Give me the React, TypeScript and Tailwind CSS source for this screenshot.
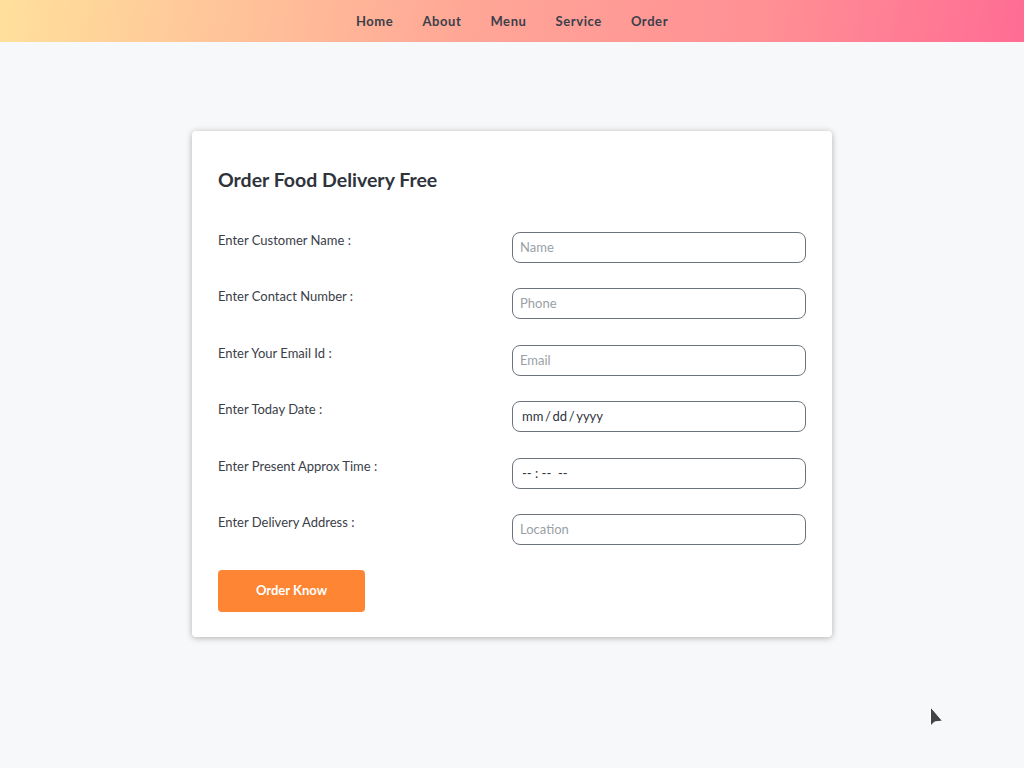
import React from "react";

const fields = [
  { label: "Enter Customer Name :", placeholder: "Name" },
  { label: "Enter Contact Number :", placeholder: "Phone" },
  { label: "Enter Your Email Id :", placeholder: "Email" },
  { label: "Enter Today Date :", value: "mm\u2009/\u2009dd\u2009/\u2009yyyy" },
  { label: "Enter Present Approx Time :", value: "-- : --  --" },
  { label: "Enter Delivery Address :", placeholder: "Location" },
];

const links = ["Home", "About", "Menu", "Service", "Order"];

const App: React.FC = () => {
  return (
    <div className="relative min-h-screen bg-[#f7f8fa] font-['Lato','Noto_Sans',sans-serif] text-[#343a40]">
      {/* barra superiore con gradiente */}
      <header className="h-[42px] bg-[linear-gradient(100deg,#ffe09b_0%,#ffa797_45%,#ff8f94_75%,#ff6c94_100%)] flex items-center justify-center pt-[2px]">
        <nav className="flex items-center gap-[29px]">
          {links.map((l) => (
            <a
              key={l}
              href="#"
              className="text-[13px] font-bold tracking-[0.6px] text-[#3a3f4a]"
            >
              {l}
            </a>
          ))}
        </nav>
      </header>

      <main className="flex justify-center pt-[89px]">
        <div className="w-[640px] bg-white rounded-[4px] shadow-[0_1px_6px_rgba(0,0,0,0.3)] px-[26px] pt-[35px] pb-[25px]">
          <h2 className="text-[19.5px] font-bold leading-[28px] text-[#2f343c]">
            Order Food Delivery Free
          </h2>

          <form className="mt-[38px] grid grid-cols-2 gap-y-[25.4px]">
            {fields.map((f) => (
              <React.Fragment key={f.label}>
                <label className="text-[13px] leading-[17px] text-[#3b4048]">
                  {f.label}
                </label>
                <input
                  type="text"
                  readOnly={!!f.value}
                  defaultValue={f.value}
                  placeholder={f.placeholder}
                  className={`h-[31px] w-full rounded-[8px] border border-[#6c737d] pb-[1px] text-[13px] text-[#2f343c] placeholder:text-[#9a9fa6] outline-none ${
                    f.value ? "px-[9px]" : "px-[7px]"
                  }`}
                />
              </React.Fragment>
            ))}
          </form>

          <button
            type="button"
            className="mt-[25px] h-[42px] w-[147px] rounded-[4px] bg-[#fd8533] text-[13px] font-bold text-white"
          >
            Order Know
          </button>
        </div>
      </main>

      {/* cursore del mouse */}
      <svg
        className="absolute left-[929px] top-[706px]"
        width="15"
        height="23"
        viewBox="0 0 15 23"
      >
        <path d="M1.5 1 L1.5 20 L5.5 16 L13.5 15 Z" fill="#444" stroke="#fff" strokeWidth="1" />
      </svg>
    </div>
  );
};

export default App;
